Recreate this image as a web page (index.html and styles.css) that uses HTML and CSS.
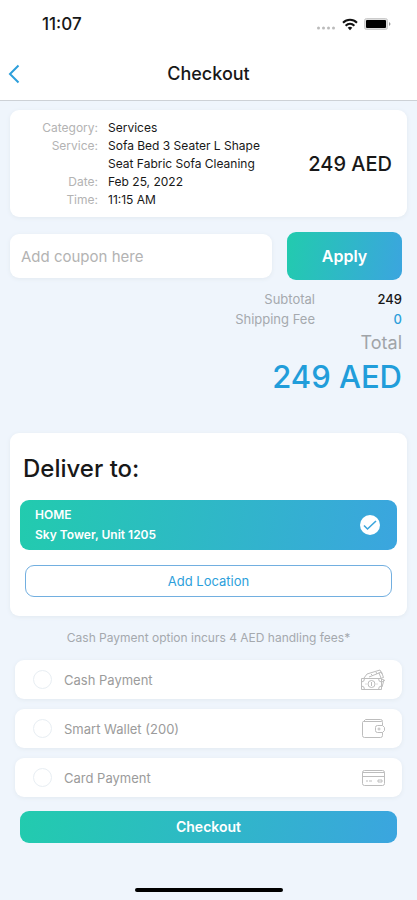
FILE: index.html
```html
<!DOCTYPE html>
<html lang="en">
<head>
<meta charset="utf-8">
<meta name="viewport" content="width=device-width, initial-scale=1">
<title>Checkout</title>
<link rel="stylesheet" href="styles.css">
</head>
<body>
<header class="top">
  <div class="status">
    <span class="clock">11:07</span>
    <span class="signals">
      <svg width="20" height="4" viewBox="0 0 20 4" fill="#bbb" aria-hidden="true"><circle cx="2.500" cy="2" r="1.500"/><circle cx="7.500" cy="2" r="1.500"/><circle cx="12.500" cy="2" r="1.500"/><circle cx="17.500" cy="2" r="1.500"/></svg>
      <svg class="wifi" width="16" height="13" viewBox="0 0 16 13" fill="none" stroke="#111" stroke-width="2" aria-hidden="true"><path d="M1 4.800C5 .8 11 .8 15 4.800"/><path d="M3.600 7.700c2.600-2.500 6.200-2.500 8.800 0"/><path d="M5.700 9.700c1.400-1.200 3.200-1.200 4.600 0L8 12.200z" fill="#111" stroke="none"/></svg>
      <svg class="battery" width="27" height="12" viewBox="0 0 27 12" aria-hidden="true"><rect x=".5" y=".5" width="23" height="11" rx="2" fill="#ddd" stroke="#ccc"/><rect x="2" y="2" width="20" height="8" rx="1"/><path d="M25 4v4q3-2 0-4" fill="#999"/></svg>
    </span>
  </div>
  <div class="nav">
    <a class="back" href="#" aria-label="Back"><svg width="12" height="20" viewBox="0 0 12 20" fill="none" stroke="#2d9fdb" stroke-width="2" aria-hidden="true"><path d="M10.500 1.500 2 10l8.500 8.500"/></svg></a>
    <h1>Checkout</h1>
  </div>
</header>
<main>
  <section class="card summary">
    <dl>
      <dt>Category:</dt><dd>Services</dd>
      <dt>Service:</dt><dd>Sofa Bed 3 Seater L Shape Seat Fabric Sofa Cleaning</dd>
      <dt>Date:</dt><dd>Feb 25, 2022</dd>
      <dt>Time:</dt><dd>11:15 AM</dd>
    </dl>
    <strong>249 AED</strong>
  </section>
  <form class="coupon">
    <input type="text" placeholder="Add coupon here" aria-label="Coupon">
    <button type="button">Apply</button>
  </form>
  <section class="totals">
    <div class="line"><span>Subtotal</span><b>249</b></div>
    <div class="line"><span>Shipping Fee</span><b class="blue">0</b></div>
    <div class="total-label">Total</div>
    <div class="total">249 AED</div>
  </section>
  <section class="card deliver">
    <h2>Deliver to:</h2>
    <button type="button" class="address">
      <span>HOME<br>Sky Tower, Unit 1205</span>
      <svg width="20" height="20" viewBox="0 0 20 20" aria-hidden="true"><circle cx="10" cy="10" r="10" fill="#fff"/><path d="M4 10.500 7.500 14 16 6" fill="none" stroke="#3aa5dc" stroke-width="1.600"/></svg>
    </button>
    <button type="button" class="add">Add Location</button>
  </section>
  <form class="payment">
    <p>Cash Payment option incurs 4 AED handling fees*</p>
    <label class="option"><input type="radio" name="pay"><span>Cash Payment</span>
      <svg width="26" height="22" viewBox="0 0 26 22" aria-hidden="true"><path d="M1.500 9.500h20v11h-20zM4 9l3-4 13-4 2 4M9 8l10-4 2 5M21.500 9l2-.5-2-5.500-3 1M22 18l2-7-2.500-1M22 13l3-2"/><circle cx="11.500" cy="15" r="3.500"/><path d="M1.500 13q3 0 3-3.500M18.500 9.500q0 3.500 3 3.500M1.500 17q3 0 3 3.500M18.500 20.500q0-3.500 3-3.500M11.500 13v4M5.500 15h1M16.500 15h1M11 5l2 2M16 3l1 2"/></svg></label>
    <label class="option"><input type="radio" name="pay"><span>Smart Wallet (200)</span>
      <svg width="26" height="22" viewBox="0 0 26 22" aria-hidden="true"><path d="M22.500 7.500v-3q0-1-1-1h-18l2-2h15q2 0 2 2M3.500 3.500q-1 0-1 1v13q0 2 2 2h16q2 0 2-2v-3M22.500 7.500h-5q-2 0-2 2v3q0 2 2 2h5l2-2v-3zM5.500 3.500h15"/><circle cx="19" cy="11" r="1"/></svg></label>
    <label class="option"><input type="radio" name="pay"><span>Card Payment</span>
      <svg width="26" height="22" viewBox="0 0 26 22" aria-hidden="true"><rect x="2.500" y="3.500" width="22" height="15" rx="2"/><path d="M2.500 5.500h22M2.500 9.500h22M6 14h2M9 14h3M18 13h4v2h-4z"/></svg></label>
    <button type="button" class="checkout">Checkout</button>
  </form>
</main>
<footer><div class="home-bar"></div></footer>
</body>
</html>
```
FILE: styles.css
```css
* { box-sizing: border-box; }
body {
  margin: 0;
  min-height: 100vh;
  display: flex;
  flex-direction: column;
  background: #eff5fc;
  color: #181818;
  font: 12px/18px Inter, sans-serif;
}
h1, h2, p, dl, dd { margin: 0; }
button, input { font: inherit; }
button {
  border: 0;
  padding: 0;
  border-radius: 9px;
  color: #fff;
  background: linear-gradient(100deg, #22cbae, #3ba5df);
}
.top { background: #fff; border-bottom: 1px solid #cdd1d6; }
.status {
  display: flex;
  justify-content: space-between;
  align-items: center;
  height: 48px;
  padding: 0 26px 0 42px;
}
.clock { font-size: 17px; font-weight: 500; }
.signals { display: flex; align-items: center; gap: 6px; }
.signals svg:first-child { margin-top: 8px; }
.nav {
  display: grid;
  grid-template-columns: 1fr auto 1fr;
  align-items: center;
  height: 52px;
  padding: 0 8px;
}
.back { display: flex; }
h1 { font-size: 18px; font-weight: 500; line-height: 24px; }
main { padding: 9px 10px 0; }
.card {
  background: #fff;
  border-radius: 9px;
  box-shadow: 0 1px 4px #e2e9f0;
}
.summary {
  display: flex;
  align-items: center;
  justify-content: space-between;
  min-height: 107px;
  padding: 8px 15px 8px 28px;
}
dl { display: grid; grid-template-columns: 60px 160px; column-gap: 10px; }
dt { text-align: right; color: #b3b3b3; }
.summary strong { font-size: 20px; font-weight: 500; white-space: nowrap; }
.coupon {
  display: flex;
  align-items: center;
  gap: 15px;
  padding: 15px 5px 0 0;
}
.coupon input {
  flex: 1;
  min-width: 0;
  height: 44px;
  border: 0;
  border-radius: 9px;
  padding: 0 11px;
  background: #fff;
  font-size: 15px;
  box-shadow: 0 1px 4px #e2e9f0;
}
.coupon input::placeholder { color: #b3b3b3; opacity: 1; }
.coupon button { width: 115px; height: 48px; font-size: 16px; font-weight: 600; }
.totals { padding: 9px 5px 0; text-align: right; }
.line {
  display: grid;
  grid-template-columns: 1fr 87px;
  line-height: 20px;
  font-size: 13px;
  color: #a5a9ae;
}
.line b { font-weight: 500; color: #181818; }
.line .blue { color: #2d9fdb; }
.total-label { font-size: 18px; line-height: 28px; color: #a0a4a8; }
.total { font-size: 31px; line-height: 40px; font-weight: 500; color: #219dda; }
.deliver { margin-top: 36px; padding: 20px 10px 19px; display: grid; }
h2 { padding-left: 3px; font-size: 24px; line-height: 32px; font-weight: 500; }
.address {
  display: flex;
  align-items: center;
  justify-content: space-between;
  min-height: 50px;
  margin-top: 15px;
  padding: 0 17px 0 15px;
  text-align: left;
  font-weight: 600;
  line-height: 20px;
}
.add {
  height: 32px;
  margin: 15px 5px 0;
  border: 1px solid #72afe0;
  background: #fff;
  color: #2d9fdb;
  font-size: 13px;
}
.payment { padding: 13px 5px 0; display: grid; gap: 10px; }
.payment p { text-align: center; color: #a5a9ae; padding-bottom: 3px; }
.option {
  display: flex;
  align-items: center;
  height: 39px;
  padding: 0 16px 0 18px;
  border-radius: 9px;
  background: #fff;
  color: #9b9b9b;
  font-size: 13px;
  box-shadow: 0 1px 4px #e2e9f0;
}
.option span { flex: 1; }
.option input {
  appearance: none;
  width: 19px;
  height: 19px;
  margin: 0 12px 0 0;
  border: 1px solid #e8eef3;
  border-radius: 50%;
}
.option input:checked { background: #2d9fdb; }
.option svg { fill: none; stroke: #bdbdbd; stroke-width: 1; }
.checkout { height: 32px; margin: 4px 5px 0; font-size: 14px; font-weight: 600; }
footer { margin-top: auto; padding: 20px 0 8px; }
.home-bar { width: 148px; height: 4px; margin: auto; border-radius: 2px; background: #000; }
```
